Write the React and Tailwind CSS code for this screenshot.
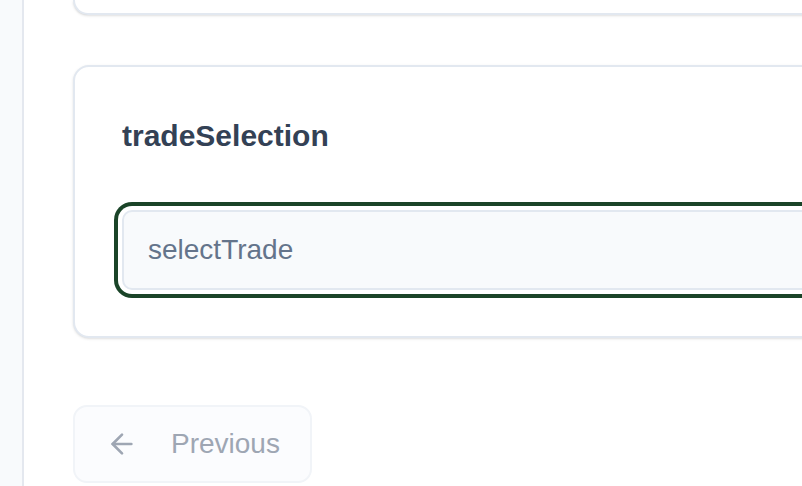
import React from 'react';

function ArrowLeftIcon() {
  return (
    <svg
      width="32"
      height="32"
      viewBox="0 0 24 24"
      fill="none"
      stroke="currentColor"
      strokeWidth={2}
      strokeLinecap="round"
      strokeLinejoin="round"
      className="shrink-0"
    >
      <path d="M19 12H5" />
      <path d="m12 19-7-7 7-7" />
    </svg>
  );
}

export default function App() {
  return (
    <div
      className="flex w-[802px] h-[486px] overflow-hidden bg-white"
      style={{ fontFamily: '"Liberation Sans", Arial, sans-serif' }}
    >
      {/* Sidebar edge */}
      <div className="w-[24px] shrink-0 bg-[#f8fafc] border-r-2 border-[#e4e8ef]" />

      {/* Main */}
      <div className="flex-1 min-w-0 pl-[49px]">
        <div className="w-[1000px]">
          {/* Previous card, scrolled mostly out of view */}
          <div className="h-[15px] bg-white border-2 border-t-0 border-[#e2e8f0] rounded-b-2xl shadow-sm" />

          {/* Trade selection card */}
          <div className="mt-[50px] bg-white border-2 border-[#e2e8f0] rounded-2xl shadow-sm px-[47px] pt-[48px] pb-[46px]">
            <h2 className="text-[30px] leading-[42px] font-bold text-[#334155]">
              tradeSelection
            </h2>
            <div className="mt-[53px] h-[80px] flex items-center px-[24px] bg-[#f8fafc] border-2 border-[#e2e8f0] rounded-[10px] ring-4 ring-[#1a4428] ring-offset-4 ring-offset-white">
              <span className="text-[28px] text-[#64748b]">selectTrade</span>
            </div>
          </div>

          {/* Navigation */}
          <div className="mt-[67px] flex">
            <button
              type="button"
              disabled
              className="h-[78px] w-[239px] flex items-center gap-[33px] pl-[31px] bg-[#fbfcfe] border-2 border-[#f1f4f8] rounded-[14px] text-[#9ea6b3] cursor-not-allowed"
            >
              <ArrowLeftIcon />
              <span className="text-[28px]">Previous</span>
            </button>
          </div>
        </div>
      </div>
    </div>
  );
}
